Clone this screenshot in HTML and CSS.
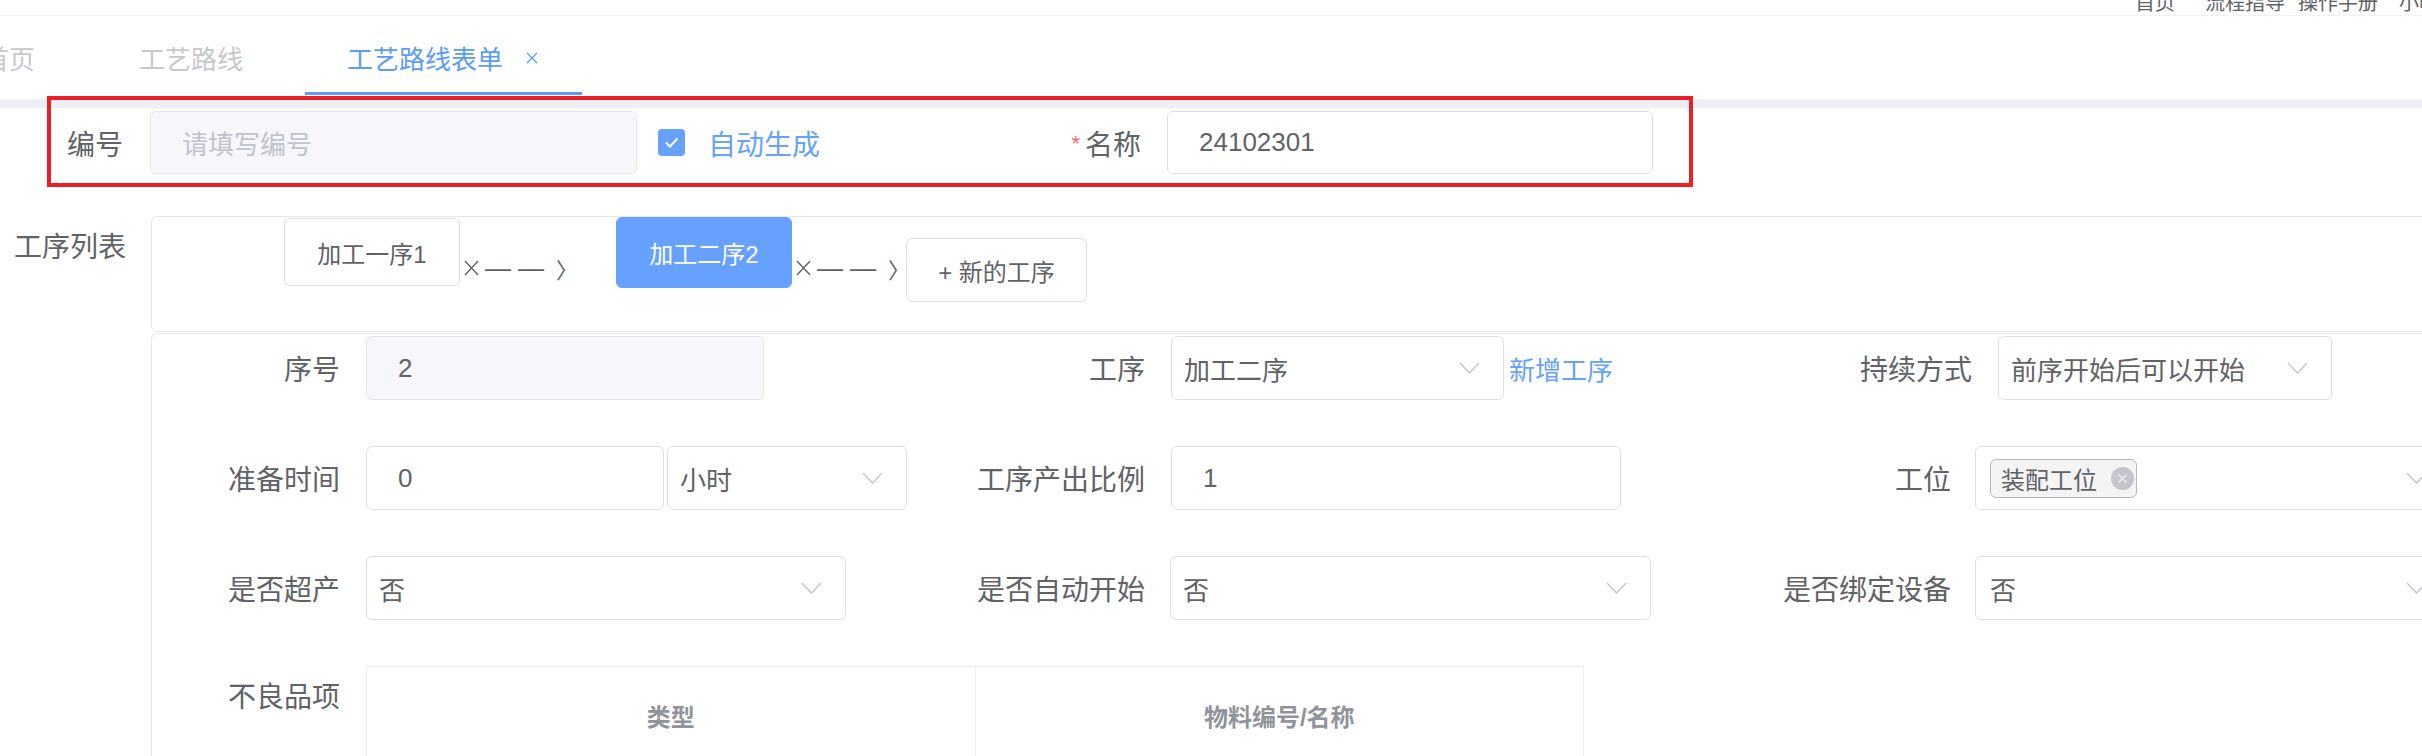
FILE: index.html
```html
<!DOCTYPE html>
<html lang="zh-CN">
<head>
    <meta charset="UTF-8">
    <meta name="viewport" content="width=device-width, initial-scale=1.0">
    <title>工艺路线表单</title>
    <link rel="stylesheet" href="styles.css">
</head>
<body>

<div class="topbar">
    <nav class="top-nav">
        <span class="nav-home">首页</span>
        <span class="nav-guide">流程指导</span>
        <span class="nav-manual">操作手册</span>
        <span class="nav-user">小明</span>
    </nav>
</div>

<div class="tabs">
    <div class="tab">首页</div>
    <div class="tab">工艺路线</div>
    <div class="tab active">工艺路线表单
        <svg class="tab-close" width="12" height="12" viewBox="0 0 12 12"><path d="M1 1L11 11M11 1L1 11" stroke="#5b9cf8" stroke-width="1.3" fill="none"/></svg>
    </div>
</div>
<div class="band"></div>

<div class="page">
    <div class="row-top">
        <div class="item-code">
            <label class="lbl">编号</label>
            <div class="input disabled"><span class="placeholder">请填写编号</span></div>
            <span class="checkbox">
                <svg width="27" height="27" viewBox="0 0 27 27"><path d="M8 13.5L12 17.5L19.5 9.5" stroke="#fff" stroke-width="2" fill="none"/></svg>
            </span>
            <span class="check-text">自动生成</span>
        </div>
        <div class="item-name">
            <label class="lbl"><span class="required">*</span>名称</label>
            <div class="input name-input">24102301</div>
        </div>
    </div>

    <div class="row-process">
        <label class="lbl">工序列表</label>
        <div class="process-box">
            <div class="step-btn">加工一序1</div>
            <div class="link-arrow">
                <svg class="x" width="15" height="16" viewBox="0 0 15 16"><path d="M1 1L14 15M14 1L1 15" stroke="#606266" stroke-width="1.4" fill="none"/></svg>
                <span class="dash">—</span><span class="dash">—</span><span class="gt">〉</span>
            </div>
            <div class="step-btn current">加工二序2</div>
            <div class="link-arrow">
                <svg class="x" width="15" height="16" viewBox="0 0 15 16"><path d="M1 1L14 15M14 1L1 15" stroke="#606266" stroke-width="1.4" fill="none"/></svg>
                <span class="dash">—</span><span class="dash">—</span><span class="gt">〉</span>
            </div>
            <div class="step-btn add">+ 新的工序</div>
        </div>
    </div>

    <div class="detail-box">
        <div class="drow">
            <div class="col col1">
                <label class="lbl">序号</label>
                <div class="input disabled w-seq">2</div>
            </div>
            <div class="col col2">
                <label class="lbl">工序</label>
                <div class="select w-step">加工二序
                    <svg class="arrow" width="21" height="12" viewBox="0 0 21 12"><polyline points="1,1 10.5,11 20,1" fill="none" stroke="#c0c4cc" stroke-width="1.3"/></svg>
                </div>
                <a class="link" href="#">新增工序</a>
            </div>
            <div class="col col3">
                <label class="lbl wide">持续方式</label>
                <div class="select w-mode">前序开始后可以开始
                    <svg class="arrow" width="21" height="12" viewBox="0 0 21 12"><polyline points="1,1 10.5,11 20,1" fill="none" stroke="#c0c4cc" stroke-width="1.3"/></svg>
                </div>
            </div>
        </div>

        <div class="drow">
            <div class="col col1">
                <label class="lbl">准备时间</label>
                <div class="input w-time">0</div>
                <div class="select w-unit">小时
                    <svg class="arrow" width="21" height="12" viewBox="0 0 21 12"><polyline points="1,1 10.5,11 20,1" fill="none" stroke="#c0c4cc" stroke-width="1.3"/></svg>
                </div>
            </div>
            <div class="col col2">
                <label class="lbl">工序产出比例</label>
                <div class="input w-ratio">1</div>
            </div>
            <div class="col col3">
                <label class="lbl">工位</label>
                <div class="select w-wide">
                    <span class="tag">装配工位
                        <span class="tag-close"><svg width="23" height="23" viewBox="0 0 23 23"><circle cx="11.5" cy="11.5" r="11.5" fill="#c4c6cc"/><path d="M7.5 7.5L15.5 15.5M15.5 7.5L7.5 15.5" stroke="#eef0f3" stroke-width="1.3"/></svg></span>
                    </span>
                    <svg class="arrow" width="21" height="12" viewBox="0 0 21 12"><polyline points="1,1 10.5,11 20,1" fill="none" stroke="#c0c4cc" stroke-width="1.3"/></svg>
                </div>
            </div>
        </div>

        <div class="drow">
            <div class="col col1">
                <label class="lbl">是否超产</label>
                <div class="select w-over">否
                    <svg class="arrow" width="21" height="12" viewBox="0 0 21 12"><polyline points="1,1 10.5,11 20,1" fill="none" stroke="#c0c4cc" stroke-width="1.3"/></svg>
                </div>
            </div>
            <div class="col col2">
                <label class="lbl">是否自动开始</label>
                <div class="select w-auto">否
                    <svg class="arrow" width="21" height="12" viewBox="0 0 21 12"><polyline points="1,1 10.5,11 20,1" fill="none" stroke="#c0c4cc" stroke-width="1.3"/></svg>
                </div>
            </div>
            <div class="col col3">
                <label class="lbl">是否绑定设备</label>
                <div class="select w-wide">否
                    <svg class="arrow" width="21" height="12" viewBox="0 0 21 12"><polyline points="1,1 10.5,11 20,1" fill="none" stroke="#c0c4cc" stroke-width="1.3"/></svg>
                </div>
            </div>
        </div>

        <div class="drow last">
            <label class="lbl">不良品项</label>
            <table class="defect-table">
                <thead>
                    <tr>
                        <th>类型</th>
                        <th>物料编号/名称</th>
                    </tr>
                </thead>
            </table>
        </div>
    </div>
</div>

<!-- annotation frame -->
<div class="mark"></div>

</body>
</html>
```

FILE: styles.css
```css
html, body {
    overflow: hidden;
}
body {
    margin: 0;
    position: relative;
    width: 2422px;
    height: 756px;
    background-color: #fff;
    font-family: "Liberation Sans", "Noto Sans CJK SC", sans-serif;
    color: #606266;
}

/* top header, cut off at the top */
.topbar {
    height: 15px;
    border-bottom: 1px solid #f2f2f2;
    overflow: hidden;
}
.top-nav {
    display: flex;
    justify-content: flex-end;
    font-size: 20px;
    line-height: 20px;
    margin-top: -7px;
    color: #5f6266;
    white-space: nowrap;
}
.nav-guide {
    margin-left: 30px;
}
.nav-manual {
    margin-left: 13px;
}
.nav-user {
    margin-left: 21px;
    margin-right: -17px;
}

/* tabs */
.tabs {
    display: flex;
    gap: 20px;
    height: 83px;
    margin-left: -59px;
    background-color: #fff;
}
.tab {
    height: 79px;
    box-sizing: border-box;
    padding: 4px 42px 0;
    display: flex;
    align-items: center;
    font-size: 26px;
    color: #c6c8cc;
    white-space: nowrap;
}
.tab.active {
    color: #5b9cf8;
    border-bottom: 3px solid #5b9cf8;
    padding-top: 7px;
    padding-right: 44px;
}
.tab-close {
    margin-left: 23px;
}
.band {
    height: 9px;
    background-color: #eff0f4;
}

.page {
    padding-top: 3px;
}

.lbl {
    box-sizing: border-box;
    flex-shrink: 0;
    text-align: right;
    font-size: 28px;
    color: #606266;
    white-space: nowrap;
}
.required {
    color: #f56c6c;
    font-size: 22px;
    margin-right: 5px;
    vertical-align: 4px;
}

.input, .select {
    box-sizing: border-box;
    height: 64px;
    border: 1px solid #dcdfe6;
    border-radius: 6px;
    display: flex;
    align-items: center;
    font-size: 26px;
    color: #606266;
    background-color: #fff;
    white-space: nowrap;
    flex-shrink: 0;
}
.input {
    padding-left: 31px;
}
.input.disabled {
    background-color: #f5f7fa;
    border-color: #e4e7ed;
}
.placeholder {
    color: #c0c4cc;
}
.select {
    padding: 0 23px 0 12px;
    justify-content: space-between;
}
.arrow {
    flex-shrink: 0;
}

/* first row */
.row-top {
    display: flex;
    align-items: center;
    height: 63px;
}
.row-top .input {
    height: 63px;
}
.item-code {
    width: 1000px;
    display: flex;
    align-items: center;
}
.item-code .lbl {
    width: 150px;
    padding-right: 27px;
}
.item-code .input {
    width: 487px;
}
.checkbox {
    margin-left: 21px;
    width: 27px;
    height: 27px;
    border-radius: 4px;
    background-color: #66a1fc;
    display: flex;
}
.check-text {
    margin-left: 23px;
    font-size: 28px;
    color: #66a1fc;
}
.item-name {
    display: flex;
    align-items: center;
}
.item-name .lbl {
    width: 167px;
    padding-right: 26px;
}
.name-input {
    width: 486px;
}

/* process list */
.row-process {
    display: flex;
    margin-top: 42px;
}
.row-process .lbl {
    width: 151px;
    padding-right: 25px;
    line-height: 64px;
}
.process-box {
    flex: 1;
    margin-right: -12px;
    height: 116px;
    box-sizing: border-box;
    border: 1px solid #e4e7ed;
    border-radius: 6px;
    padding: 1px 0 0 132px;
    display: flex;
    align-items: flex-start;
}
.step-btn {
    box-sizing: border-box;
    width: 176px;
    height: 68px;
    border: 1px solid #dcdfe6;
    border-radius: 6px;
    display: flex;
    align-items: center;
    justify-content: center;
    font-size: 24px;
    color: #606266;
    background-color: #fff;
    white-space: nowrap;
}
.step-btn.current {
    height: 71px;
    margin-top: -1px;
    margin-left: 50px;
    background-color: #66a1ff;
    border-color: #66a1ff;
    color: #fff;
}
.step-btn.add {
    width: 181px;
    height: 64px;
    margin-top: 20px;
    margin-left: 8px;
}
.link-arrow {
    display: flex;
    align-items: center;
    width: 102px;
    margin-left: 4px;
    margin-top: 36px;
    height: 28px;
    color: #606266;
    font-family: "Liberation Sans", sans-serif;
}
.link-arrow .x {
    flex-shrink: 0;
    margin-right: 6px;
}
.link-arrow .dash {
    font-size: 26px;
    margin-right: 7px;
}
.link-arrow .gt {
    font-family: "Noto Sans CJK SC", sans-serif;
    margin-left: auto;
    font-size: 22px;
    margin-right: -12px;
}

/* process details */
.detail-box {
    margin-left: 151px;
    margin-top: 1px;
    height: 500px;
    border-top: 1px solid #e4e7ed;
    border-left: 1px solid #e4e7ed;
    border-top-left-radius: 6px;
    padding-top: 2px;
}
.drow {
    display: flex;
    align-items: center;
    height: 64px;
    margin-bottom: 46px;
}
.col {
    display: flex;
    align-items: center;
    flex-shrink: 0;
}
.col1 {
    width: 728px;
}
.col2 {
    width: 820px;
}
.col3 {
    flex: 1;
}
.col1 .lbl, .drow.last .lbl {
    width: 214px;
    padding-right: 26px;
}
.col2 .lbl {
    width: 291px;
    padding-right: 26px;
}
.col3 .lbl {
    width: 275px;
    padding-right: 24px;
}
.col3 .lbl.wide {
    width: 298px;
    padding-right: 26px;
}
.w-seq { width: 398px; }
.w-time { width: 298px; }
.w-unit { width: 240px; margin-left: 3px; }
.w-over { width: 480px; }
.w-step { width: 333px; }
.w-ratio { width: 450px; }
.w-auto { width: 481px; margin-left: -1px; }
.w-mode { width: 334px; }
.w-wide { width: 476px; padding-left: 14px; }

.link {
    margin-left: 5px;
    font-size: 26px;
    color: #66a1fc;
    text-decoration: none;
    white-space: nowrap;
}

.tag {
    box-sizing: border-box;
    height: 39px;
    display: flex;
    align-items: center;
    padding: 0 2px 0 10px;
    border: 1px solid #b4b7bd;
    border-radius: 6px;
    background-color: #f4f4f5;
    font-size: 24px;
    color: #606266;
}
.tag-close {
    display: flex;
    margin-left: 14px;
}

.drow.last {
    align-items: flex-start;
    height: auto;
}
.drow.last .lbl {
    line-height: 64px;
}
.defect-table {
    width: 1218px;
    border-collapse: collapse;
    table-layout: fixed;
}
.defect-table th {
    height: 96px;
    border-top: 1px solid #ebeef5;
    border-left: 1px solid #ebeef5;
    border-right: 1px solid #ebeef5;
    font-size: 24px;
    font-weight: bold;
    color: #909399;
    text-align: center;
    padding: 0;
}

/* red annotation frame */
.mark {
    position: absolute;
    left: 47px;
    top: 96px;
    width: 1646px;
    height: 91px;
    box-sizing: border-box;
    border: 4px solid #eb1f26;
    pointer-events: none;
}
```
